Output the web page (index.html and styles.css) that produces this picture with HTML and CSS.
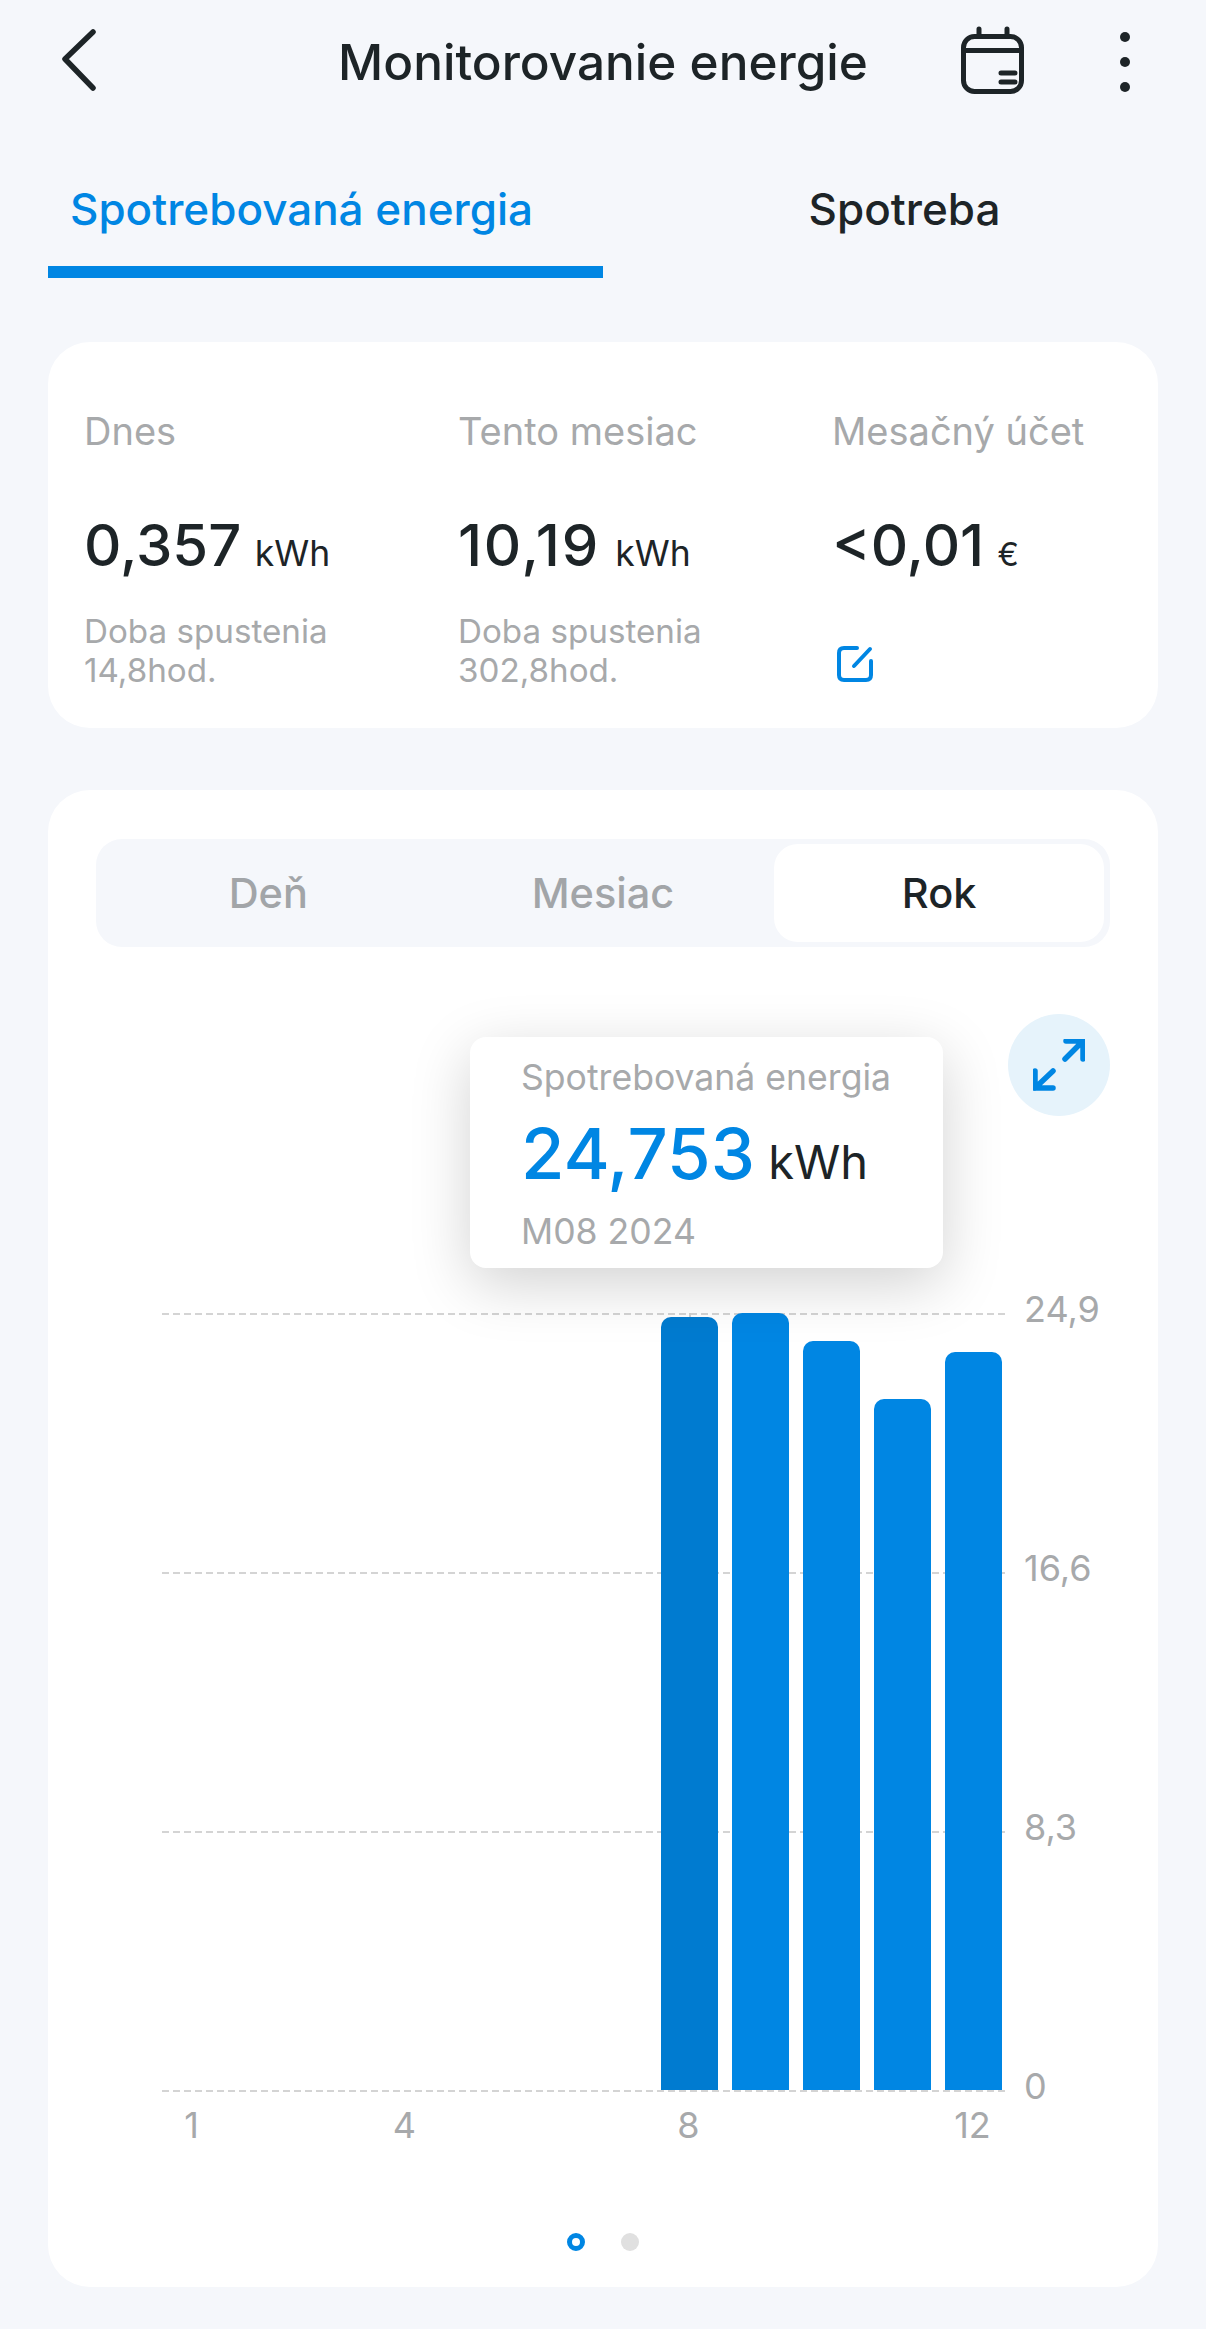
FILE: index.html
```html
<!DOCTYPE html>
<html lang="sk">
<head>
  <meta charset="UTF-8">
  <title>Monitorovanie energie</title>
  <link rel="stylesheet" href="styles.css">
</head>
<body>

  <header class="topbar">
    <svg class="back" width="36" height="62" viewBox="0 0 36 62">
      <path d="M33 3 L5 30 L33 59"/>
    </svg>
    <h1>Monitorovanie energie</h1>
    <div class="actions">
      <svg class="calendar" width="68" height="70" viewBox="0 0 68 70">
        <rect x="4.5" y="11.5" width="58" height="55" rx="11"/>
        <path d="M4.5 25.5 H62.5 M20 4 V11 M48 4 V11 M42 48 H56 M42 57 H56"/>
      </svg>
      <div class="dots"><i></i><i></i><i></i></div>
    </div>
  </header>

  <nav class="tabs">
    <div class="tab active">Spotrebovaná energia</div>
    <div class="tab">Spotreba</div>
  </nav>

  <section class="card summary">
    <div class="stat">
      <div class="stat-label">Dnes</div>
      <div class="stat-value">0,357 <small>kWh</small></div>
      <div class="stat-note">Doba spustenia<br>14,8hod.</div>
    </div>
    <div class="stat">
      <div class="stat-label">Tento mesiac</div>
      <div class="stat-value spaced">10,19 <small>kWh</small></div>
      <div class="stat-note">Doba spustenia<br>302,8hod.</div>
    </div>
    <div class="stat">
      <div class="stat-label">Mesačný účet</div>
      <div class="stat-value">&lt;0,01 <small class="euro">€</small></div>
      <svg class="edit" width="36" height="36" viewBox="0 0 36 36">
        <path d="M20 2 H7 Q2 2 2 7 V29 Q2 34 7 34 H29 Q34 34 34 29 V15"/>
        <path d="M33 3 L17 20"/>
      </svg>
    </div>
  </section>

  <section class="card chart-card">
    <div class="segment">
      <div class="seg">Deň</div>
      <div class="seg">Mesiac</div>
      <div class="seg on">Rok</div>
    </div>

    <div class="chart">
      <div class="expand">
        <svg width="52" height="52" viewBox="0 0 52 52">
          <path d="M32 20 L50 2 M33 2 H50 V20"/>
          <path d="M20 32 L2 49 M2 32 V49 H20"/>
        </svg>
      </div>

      <div class="tooltip">
        <div class="tip-title">Spotrebovaná energia</div>
        <div class="tip-value"><b>24,753</b> kWh</div>
        <div class="tip-date">M08 2024</div>
      </div>

      <div class="plot">
        <div class="gridlines">
          <div class="gridline"><span>24,9</span></div>
          <div class="gridline"><span>16,6</span></div>
          <div class="gridline"><span>8,3</span></div>
          <div class="gridline"><span>0</span></div>
        </div>
        <div class="crosshair"></div>
        <div class="bar sel" style="grid-column: 8; height: 773px"></div>
        <div class="bar" style="grid-column: 9; height: 777px"></div>
        <div class="bar" style="grid-column: 10; height: 749px"></div>
        <div class="bar" style="grid-column: 11; height: 691px"></div>
        <div class="bar" style="grid-column: 12; height: 738px"></div>
      </div>

      <div class="x-axis">
        <span style="grid-column: 1">1</span>
        <span style="grid-column: 4">4</span>
        <span style="grid-column: 8">8</span>
        <span style="grid-column: 12">12</span>
      </div>
    </div>

    <div class="pager">
      <i class="current"></i>
      <i></i>
    </div>
  </section>

</body>
</html>
```

FILE: styles.css
```css
* {
  box-sizing: border-box;
}
body {
  margin: 0;
  width: 1206px;
  height: 2329px;
  overflow: hidden;
  background: #f5f7fb;
  font-family: Inter, "Noto Sans", sans-serif;
  color: #1d2427;
}

/* top bar */
.topbar {
  display: grid;
  grid-template-columns: 1fr auto 1fr;
  align-items: center;
  height: 124px;
  padding: 0 76px 0 60px;
}
.back {
  margin-bottom: 4px;
  fill: none;
  stroke: #1d2427;
  stroke-width: 5.5;
  stroke-linecap: round;
  stroke-linejoin: round;
}
.topbar h1 {
  margin: 0 0 0 16px;
  font-size: 49.5px;
  font-weight: 500;
  white-space: nowrap;
}
.actions {
  display: flex;
  justify-content: flex-end;
  align-items: center;
  gap: 93px;
}
.calendar {
  margin-bottom: 4px;
  fill: none;
  stroke: #1d2427;
  stroke-width: 5;
  stroke-linecap: round;
}
.dots {
  display: flex;
  flex-direction: column;
  gap: 15px;
}
.dots i {
  width: 10px;
  height: 10px;
  border-radius: 50%;
  background: #1d2427;
}

/* tabs */
.tabs {
  display: flex;
  margin: 0 48px;
  height: 154px;
}
.tab {
  flex: 1;
  padding: 58px 0 0 48px;
  text-align: center;
  font-size: 44px;
  font-weight: 450;
}
.tab.active {
  padding: 58px 48px 0 0;
  color: #0086e3;
  border-bottom: 12px solid #0086e3;
}

.card {
  margin: 64px 48px 0;
  background: #fff;
  border-radius: 42px;
}

/* summary */
.summary {
  display: grid;
  grid-template-columns: 374px 374px 1fr;
  height: 386px;
  padding: 66px 0 0 36px;
}
.stat-label {
  font-size: 38px;
  line-height: 46px;
  color: #a7a9ab;
}
.stat-value {
  margin-top: 53px;
  font-size: 58px;
  line-height: 76px;
  font-weight: 500;
  white-space: nowrap;
  word-spacing: -2px;
}
.stat-value.spaced {
  letter-spacing: 1.8px;
}
.stat-value small {
  font-size: 35.5px;
  font-weight: 400;
  letter-spacing: 0;
}
.stat-value small.euro {
  font-size: 32px;
}
.stat-note {
  margin-top: 20px;
  font-size: 33.2px;
  line-height: 39px;
  color: #a7a9ab;
}
.edit {
  display: block;
  margin: 53px 0 0 5px;
  fill: none;
  stroke: #0086e3;
  stroke-width: 4;
  stroke-linecap: round;
}

/* chart card */
.chart-card {
  height: 1497px;
  margin-top: 62px;
  padding-top: 49px;
}
.segment {
  display: grid;
  grid-template-columns: repeat(3, 1fr);
  height: 108px;
  margin: 0 48px;
  padding: 5px;
  background: #f5f7fb;
  border-radius: 26px;
}
.seg {
  display: flex;
  align-items: center;
  justify-content: center;
  font-size: 41.5px;
  font-weight: 450;
  color: #a2a5a8;
}
.seg.on {
  margin: 0 1px 0 4px;
  background: #fff;
  border-radius: 24px;
  color: #1d2427;
}

.chart {
  position: relative;
  padding: 366px 0 0 114px;
}
.expand {
  position: absolute;
  top: 67px;
  right: 48px;
  width: 102px;
  height: 102px;
  display: flex;
  align-items: center;
  justify-content: center;
  border-radius: 50%;
  background: #e6f3fb;
}
.expand svg {
  fill: none;
  stroke: #0086e3;
  stroke-width: 5.5;
  stroke-linecap: round;
}
.tooltip {
  position: absolute;
  z-index: 2;
  top: 90px;
  left: 422px;
  width: 473px;
  height: 231px;
  padding: 16px 0 0 51px;
  background: #fff;
  border-radius: 16px;
  box-shadow: 0 16px 60px rgba(0, 0, 0, 0.18);
}
.tip-title,
.tip-date {
  font-size: 35.6px;
  line-height: 50px;
  color: #a7a9ab;
}
.tip-value {
  margin-top: 5px;
  font-size: 47px;
  line-height: 91px;
  white-space: nowrap;
}
.tip-value b {
  font-size: 70.6px;
  font-weight: 500;
  color: #0086e3;
}

.plot {
  position: relative;
  display: grid;
  grid-template-columns: repeat(12, 57px);
  column-gap: 14px;
  align-items: end;
  width: 844px;
  height: 777px;
  padding: 0 4px 0 2px;
}
.gridlines {
  position: absolute;
  inset: 0 0 -2px 0;
  display: flex;
  flex-direction: column;
  justify-content: space-between;
}
.gridline {
  position: relative;
  height: 2px;
  background: repeating-linear-gradient(90deg, #d4d4d4 0 7px, transparent 7px 11px);
}
.gridline span {
  position: absolute;
  left: 862px;
  top: -26px;
  font-size: 36px;
  line-height: 44px;
  color: #a7a9ab;
}
.crosshair {
  position: absolute;
  left: 527px;
  top: 0;
  bottom: 0;
  width: 2px;
  background: #cfcfcf;
}
.bar {
  position: relative;
  grid-row: 1;
  background: #0086e3;
  border-radius: 10px 10px 0 0;
}
.bar.sel {
  background: #007bd0;
}
.x-axis {
  display: grid;
  grid-template-columns: repeat(12, 57px);
  column-gap: 14px;
  width: 844px;
  padding: 13px 4px 0 1px;
  font-size: 36px;
  line-height: 44px;
  text-align: center;
  color: #a7a9ab;
}

.pager {
  display: flex;
  justify-content: center;
  gap: 36px;
  margin-top: 86px;
}
.pager i {
  width: 18px;
  height: 18px;
  border-radius: 50%;
  background: #e0e0e0;
}
.pager i.current {
  background: #fff;
  border: 5px solid #0086e3;
}
```
